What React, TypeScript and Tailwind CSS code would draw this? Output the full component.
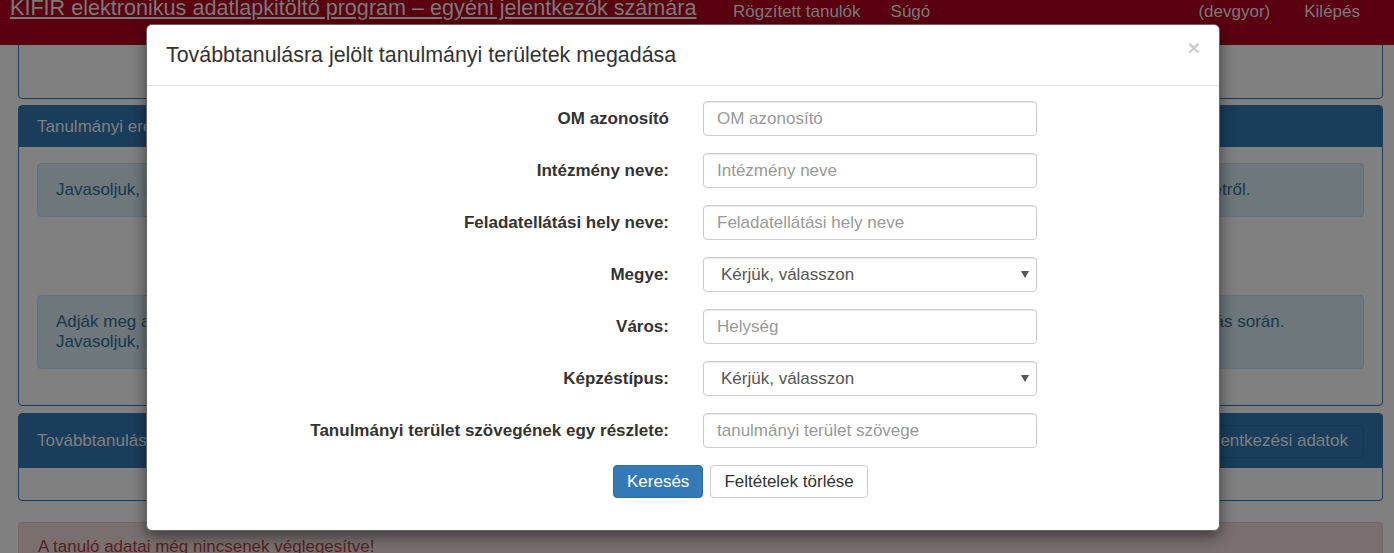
import type { ReactNode } from 'react';

// KIFIR – modal for choosing study areas, opened over the (dimmed) student page

function Field({ label, children }: { label: string; children: ReactNode }) {
    return (
        <div className="flex items-center">
            <label className="w-[507px] text-right text-[17px] font-bold leading-[20px] text-[#333]">{label}</label>
            <div className="relative ml-[34px] w-[334px]">{children}</div>
        </div>
    );
}

const inputCls =
    "h-[35px] w-full rounded-[4px] border border-[#ccc] bg-white px-[13px] text-[17px] text-[#555] shadow-[inset_0_1px_1px_rgba(0,0,0,0.075)] outline-none placeholder:text-[#999]";

function Select() {
    return (
        <>
            <select className={`${inputCls} appearance-none pl-[17px] text-[#333]`} defaultValue="">
                <option value="">Kérjük, válasszon</option>
            </select>
            <svg className="pointer-events-none absolute right-[8px] top-[14px] h-[7px] w-[8px]" viewBox="0 0 8 7">
                <path d="M0 0h8L4 7z" fill="#555" />
            </svg>
        </>
    );
}

export default function App() {
    return (
        <div className="relative h-[553px] overflow-hidden bg-[#808080] font-['Liberation_Sans',Arial,sans-serif]">
            {/* NAVBAR (behind the backdrop, so in its dimmed colours) */}
            <div className="absolute left-0 right-0 top-0 z-10 flex h-[45px] items-start bg-[#5a0010] text-[#7b7b7b]">
                <a className="w-[718px] shrink-0 pl-[10px] text-[21.6px] leading-[16px] underline">
                    KIFIR elektronikus adatlapkitöltő program – egyéni jelentkezők számára
                </a>
                <a className="px-[15px] text-[17px] leading-[24px]">Rögzített tanulók</a>
                <a className="px-[15px] text-[17px] leading-[24px]">Súgó</a>
                <span className="ml-auto mr-[19px] text-[17px] leading-[24px]">(devgyor)</span>
                <a className="mr-[19px] px-[15px] text-[17px] leading-[24px]">Kilépés</a>
            </div>

            {/* PAGE CONTENT */}
            <div className="ml-[18px] mr-[11px] text-[17px]">
                <div className="rounded-[4px] border border-[#1a3d5c]">
                    <div className="h-[41px] bg-[#1a3d5c] px-[18px] py-[10px] leading-[21px] text-[#808080]">Tanuló adatai</div>
                    <div className="flex h-[56px] items-center justify-center gap-2">
                        <button className="rounded-[4px] border border-[#666] px-3 py-1.5 text-[#1a1a1a]">Adatok módosítása</button>
                    </div>
                </div>

                <div className="mt-[6px] rounded-[4px] border border-[#1a3d5c]">
                    <div className="h-[41px] bg-[#1a3d5c] px-[18px] py-[10px] leading-[21px] text-[#808080]">Tanulmányi eredmények</div>
                    <div className="px-[18px] pb-[36px] pt-[16px]">
                        <div className="whitespace-nowrap rounded-[4px] border border-[#5e7479] bg-[#6d777c] px-[18px] py-[16px] leading-[20px] text-[#193848]">
                            Javasoljuk, hogy a tanulmányi eredmények rögzítése előtt tájékozódjanak a választott középfokú iskolák felvételi követelményeiről a KIFIR internetes felületről.
                        </div>
                        <div className="mt-[20px] flex h-[38px] items-center justify-center">
                            <button className="rounded-[4px] bg-[#1a3d5c] px-4 py-1.5 text-[#808080]">Tanulmányi eredmények rögzítése</button>
                        </div>
                        <div className="mt-[20px] rounded-[4px] border border-[#5e7479] bg-[#6d777c] px-[18px] py-[16px] leading-[20px] text-[#193848]">
                            Adják meg a tanuló 5–8. évfolyamos tanulmányi eredményeit azokból a tantárgyakból, melyeket a középfokú iskolák is figyelembe vesznek a felvételi eljárás során.
                            <br />
                            Javasoljuk, hogy az adatokat a bizonyítvány alapján, gondosan ellenőrizve rögzítsék.
                        </div>
                    </div>
                </div>

                <div className="mt-[7px] rounded-[4px] border border-[#1a3d5c]">
                    <div className="flex h-[54px] items-center justify-between bg-[#1a3d5c] px-[18px] text-[#808080]">
                        <span>Továbbtanulásra jelölt tanulmányi területek</span>
                        <button className="h-[33px] rounded-[4px] border border-[#173752] bg-[#1a3d5c] px-[15px] text-[#808080]">
                            Jelentkezési adatok
                        </button>
                    </div>
                    <div className="h-[32px]" />
                </div>

                <div className="mt-[21px] rounded-[4px] border border-[#766669] bg-[#796f6f] px-[19px] pb-[15px] pt-[14px] leading-[20px] text-[#552221]">
                    A tanuló adatai még nincsenek véglegesítve!
                </div>
            </div>

            {/* MODAL DIALOG */}
            <div className="absolute left-0 top-0 z-20 pl-[146px] pt-[24px]">
                <div className="w-[1074px] rounded-[6px] border border-[#666] bg-white shadow-[0_5px_15px_rgba(0,0,0,0.5)]">
                    <div className="flex items-start justify-between border-b border-[#e5e5e5] px-[19px] py-[15px]">
                        <h4 className="text-[21.4px] leading-[30px] text-[#333]">Továbbtanulásra jelölt tanulmányi területek megadása</h4>
                        <button className="mt-[-7px] text-[21px] font-bold leading-[30px] text-[#ccc]">×</button>
                    </div>
                    <div className="flex flex-col gap-[17px] px-[15px] pb-[32px] pt-[15px]">
                        <Field label="OM azonosító">
                            <input className={inputCls} placeholder="OM azonosító" />
                        </Field>
                        <Field label="Intézmény neve:">
                            <input className={inputCls} placeholder="Intézmény neve" />
                        </Field>
                        <Field label="Feladatellátási hely neve:">
                            <input className={inputCls} placeholder="Feladatellátási hely neve" />
                        </Field>
                        <Field label="Megye:">
                            <Select />
                        </Field>
                        <Field label="Város:">
                            <input className={inputCls} placeholder="Helység" />
                        </Field>
                        <Field label="Képzéstípus:">
                            <Select />
                        </Field>
                        <Field label="Tanulmányi terület szövegének egy részlete:">
                            <input className={inputCls} placeholder="tanulmányi terület szövege" />
                        </Field>
                        <div className="flex gap-[7px] pl-[451px]">
                            <button className="h-[33px] rounded-[4px] border border-[#2e6da4] bg-[#337ab7] px-[13px] text-[17px] text-white">
                                Keresés
                            </button>
                            <button className="h-[33px] rounded-[4px] border border-[#ccc] bg-white px-[13px] text-[17px] text-[#333]">
                                Feltételek törlése
                            </button>
                        </div>
                    </div>
                </div>
            </div>
        </div>
    );
}
